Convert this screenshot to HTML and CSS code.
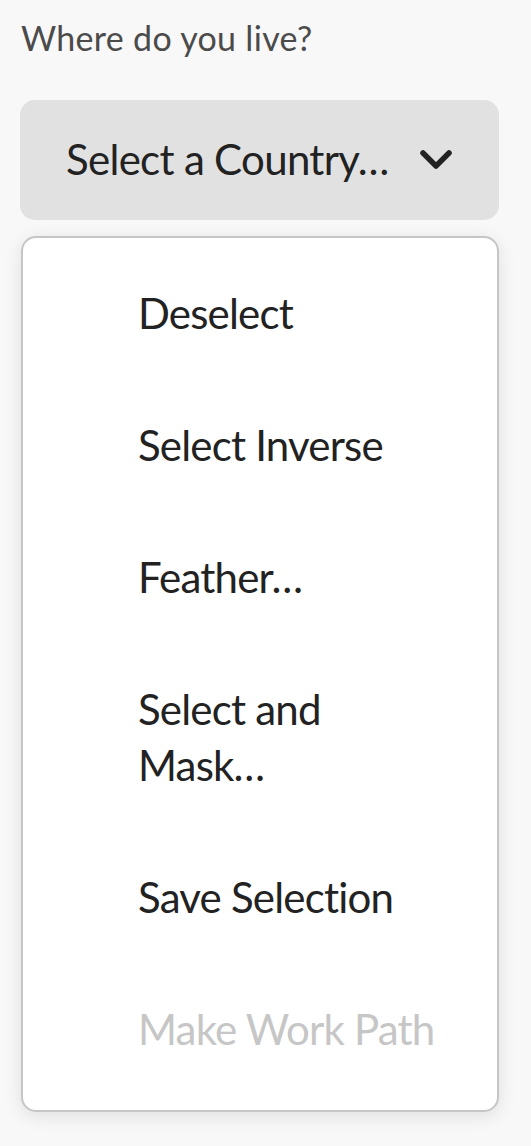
FILE: index.html
```html
<!DOCTYPE html>
<html lang="en">
<head>
<meta charset="utf-8">
<title>Picker</title>
<link rel="stylesheet" href="styles.css">
</head>
<body>
<div class="field">
  <div class="field-label">Where do you live?</div>
  <button class="picker" type="button">
    <span class="picker-value">Select a Country…</span>
    <svg class="chevron" width="32" height="20" viewBox="0 0 32 20" aria-hidden="true">
      <polyline points="3,3 16,16 29,3" fill="none" stroke="#222" stroke-width="5.5" stroke-linecap="round" stroke-linejoin="round"/>
    </svg>
  </button>
  <ul class="menu" role="listbox">
    <li class="menu-item">Deselect</li>
    <li class="menu-item">Select Inverse</li>
    <li class="menu-item">Feather…</li>
    <li class="menu-item">Select and Mask…</li>
    <li class="menu-item">Save Selection</li>
    <li class="menu-item is-disabled">Make Work Path</li>
  </ul>
</div>
</body>
</html>
```
FILE: styles.css
```css
html, body {
  margin: 0;
  padding: 0;
}
body {
  background: #f8f8f8;
  font-family: Lato, "Open Sans", "Noto Sans", sans-serif;
  color: #222222;
  width: 531px;
  height: 1146px;
  overflow: hidden;
}
.field {
  display: flex;
  flex-direction: column;
  padding: 16px 32px 0 20px;
}
.field-label {
  font-size: 34px;
  line-height: 44px;
  color: #4b4b4b;
  padding-left: 1px;
  letter-spacing: 0.3px;
}
.picker {
  margin-top: 40px;
  height: 120px;
  width: 479px;
  border: none;
  border-radius: 15px;
  background: #e1e1e1;
  display: flex;
  align-items: center;
  padding: 0 47px 0 46px;
  font: inherit;
  font-size: 42px;
  letter-spacing: -0.7px;
  color: #222222;
  text-align: left;
  box-sizing: border-box;
}
.picker-value {
  flex: 1;
  white-space: nowrap;
  padding-bottom: 2px;
}
.chevron {
  display: block;
  flex: none;
}
.menu {
  list-style: none;
  margin: 16px 0 0 1px;
  padding: 9px 0 15px 0;
  width: 478px;
  box-sizing: border-box;
  background: #ffffff;
  border: 2px solid #c6c6c6;
  border-radius: 15px;
  box-shadow: 0 4px 18px rgba(0, 0, 0, 0.10);
}
.menu-item {
  font-size: 42px;
  line-height: 56px;
  letter-spacing: -0.8px;
  padding: 38px 60px 38px 115px;
  color: #222222;
}
.menu-item.is-disabled {
  color: #c6c6c6;
}
```
